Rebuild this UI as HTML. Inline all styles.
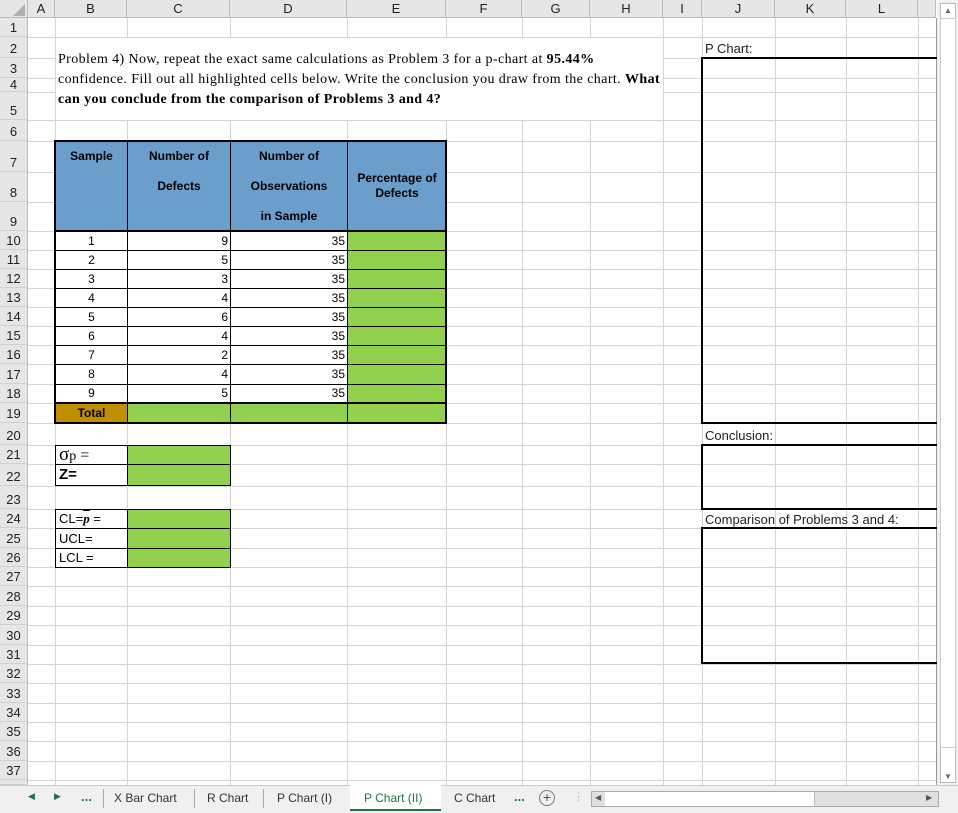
<!DOCTYPE html>
<html><head><meta charset="utf-8"><style>
*{margin:0;padding:0;box-sizing:border-box}
body{width:958px;height:813px;overflow:hidden;background:#fff;position:relative;font-family:"Liberation Sans",sans-serif}
div{position:absolute}
.h{left:28px;width:908px;height:1px;background:#d4d4d4}
.v{top:18px;height:767px;width:1px;background:#d4d4d4}
.rn{left:0;width:28px;background:#e6e6e6;border-right:1px solid #bbb;border-bottom:1px solid #d0d0d0;font-size:13px;color:#222;text-align:center;display:flex;align-items:flex-end;justify-content:center;line-height:1}
.ch{top:0;height:18px;background:#e6e6e6;border-right:1px solid #bbb;border-bottom:1px solid #bbb;font-size:13px;color:#222;text-align:center;line-height:18px}
.g{background:#92d050}
.bl{background:#6b9ecb}
.hd{font-weight:bold;font-size:12px;text-align:center;color:#000}
.lab{font-size:13px;color:#000;border:1px solid #000;padding-left:3px}
.gb{background:#92d050;border:1px solid #000}
.tab{top:788px;font-size:12px;color:#333;height:20px;line-height:20px}
</style></head><body>
<div class="h" style="top:37px"></div><div class="h" style="top:58px"></div><div class="h" style="top:78px"></div><div class="h" style="top:92px"></div><div class="h" style="top:120px"></div><div class="h" style="top:141px"></div><div class="h" style="top:172px"></div><div class="h" style="top:202px"></div><div class="h" style="top:231px"></div><div class="h" style="top:250px"></div><div class="h" style="top:269px"></div><div class="h" style="top:288px"></div><div class="h" style="top:307px"></div><div class="h" style="top:326px"></div><div class="h" style="top:345px"></div><div class="h" style="top:364px"></div><div class="h" style="top:384px"></div><div class="h" style="top:403px"></div><div class="h" style="top:423px"></div><div class="h" style="top:445px"></div><div class="h" style="top:464px"></div><div class="h" style="top:486px"></div><div class="h" style="top:509px"></div><div class="h" style="top:528px"></div><div class="h" style="top:548px"></div><div class="h" style="top:567px"></div><div class="h" style="top:586px"></div><div class="h" style="top:606px"></div><div class="h" style="top:625px"></div><div class="h" style="top:645px"></div><div class="h" style="top:664px"></div><div class="h" style="top:683px"></div><div class="h" style="top:703px"></div><div class="h" style="top:722px"></div><div class="h" style="top:741px"></div><div class="h" style="top:761px"></div><div class="h" style="top:780px"></div>
<div class="v" style="left:55px"></div><div class="v" style="left:127px"></div><div class="v" style="left:230px"></div><div class="v" style="left:347px"></div><div class="v" style="left:446px"></div><div class="v" style="left:522px"></div><div class="v" style="left:590px"></div><div class="v" style="left:663px"></div><div class="v" style="left:702px"></div><div class="v" style="left:775px"></div><div class="v" style="left:846px"></div><div class="v" style="left:918px"></div>
<div style="left:936px;top:18px;width:1px;height:767px;background:#999"></div>
<div style="left:56px;top:38px;width:607px;height:82px;background:#fff"></div>
<div style="left:58px;top:50px;width:605px;font-family:'Liberation Serif',serif;font-size:14px;letter-spacing:0.4px;line-height:20px;color:#000;white-space:nowrap">Problem 4) Now, repeat the exact same calculations as Problem 3 for a p-chart at <b>95.44%</b><br>confidence. Fill out all highlighted cells below. Write the conclusion you draw from the chart. <b>What</b><br><b>can you conclude from the comparison of Problems 3 and 4?</b></div>
<div class="ch" style="left:0;width:28px;background:#e6e6e6"><svg width="14" height="14" style="position:absolute;left:12px;top:3px"><polygon points="13,1 13,13 1,13" fill="#b0b0b0"/></svg></div>
<div class="ch" style="left:28px;width:27px">A</div><div class="ch" style="left:55px;width:72px">B</div><div class="ch" style="left:127px;width:103px">C</div><div class="ch" style="left:230px;width:117px">D</div><div class="ch" style="left:347px;width:99px">E</div><div class="ch" style="left:446px;width:76px">F</div><div class="ch" style="left:522px;width:68px">G</div><div class="ch" style="left:590px;width:73px">H</div><div class="ch" style="left:663px;width:39px">I</div><div class="ch" style="left:702px;width:73px">J</div><div class="ch" style="left:775px;width:71px">K</div><div class="ch" style="left:846px;width:72px">L</div><div class="ch" style="left:918px;width:18px"></div>
<div class="rn" style="top:18px;height:19px;padding-bottom:2px">1</div>
<div class="rn" style="top:37px;height:21px;padding-bottom:2px">2</div>
<div class="rn" style="top:58px;height:20px;padding-bottom:2px">3</div>
<div class="rn" style="top:78px;height:14px;padding-bottom:0">4</div>
<div class="rn" style="top:92px;height:28px;padding-bottom:2px">5</div>
<div class="rn" style="top:120px;height:21px;padding-bottom:2px">6</div>
<div class="rn" style="top:141px;height:31px;padding-bottom:2px">7</div>
<div class="rn" style="top:172px;height:30px;padding-bottom:2px">8</div>
<div class="rn" style="top:202px;height:29px;padding-bottom:2px">9</div>
<div class="rn" style="top:231px;height:19px;padding-bottom:2px">10</div>
<div class="rn" style="top:250px;height:19px;padding-bottom:2px">11</div>
<div class="rn" style="top:269px;height:19px;padding-bottom:2px">12</div>
<div class="rn" style="top:288px;height:19px;padding-bottom:2px">13</div>
<div class="rn" style="top:307px;height:19px;padding-bottom:2px">14</div>
<div class="rn" style="top:326px;height:19px;padding-bottom:2px">15</div>
<div class="rn" style="top:345px;height:19px;padding-bottom:2px">16</div>
<div class="rn" style="top:364px;height:20px;padding-bottom:2px">17</div>
<div class="rn" style="top:384px;height:19px;padding-bottom:2px">18</div>
<div class="rn" style="top:403px;height:20px;padding-bottom:2px">19</div>
<div class="rn" style="top:423px;height:22px;padding-bottom:2px">20</div>
<div class="rn" style="top:445px;height:19px;padding-bottom:2px">21</div>
<div class="rn" style="top:464px;height:22px;padding-bottom:2px">22</div>
<div class="rn" style="top:486px;height:23px;padding-bottom:2px">23</div>
<div class="rn" style="top:509px;height:19px;padding-bottom:2px">24</div>
<div class="rn" style="top:528px;height:20px;padding-bottom:2px">25</div>
<div class="rn" style="top:548px;height:19px;padding-bottom:2px">26</div>
<div class="rn" style="top:567px;height:19px;padding-bottom:2px">27</div>
<div class="rn" style="top:586px;height:20px;padding-bottom:2px">28</div>
<div class="rn" style="top:606px;height:19px;padding-bottom:2px">29</div>
<div class="rn" style="top:625px;height:20px;padding-bottom:2px">30</div>
<div class="rn" style="top:645px;height:19px;padding-bottom:2px">31</div>
<div class="rn" style="top:664px;height:19px;padding-bottom:2px">32</div>
<div class="rn" style="top:683px;height:20px;padding-bottom:2px">33</div>
<div class="rn" style="top:703px;height:19px;padding-bottom:2px">34</div>
<div class="rn" style="top:722px;height:19px;padding-bottom:2px">35</div>
<div class="rn" style="top:741px;height:20px;padding-bottom:2px">36</div>
<div class="rn" style="top:761px;height:19px;padding-bottom:2px">37</div>
<div class="rn" style="top:780px;height:5px"></div>
<div class="bl" style="left:55px;top:141px;width:391px;height:90px"></div>
<div style="left:127px;top:141px;width:1px;height:90px;background:#000"></div>
<div style="left:230px;top:141px;width:1px;height:90px;background:#000"></div>
<div style="left:347px;top:141px;width:1px;height:90px;background:#000"></div>
<div class="hd" style="left:56px;top:149px;width:71px">Sample</div>
<div class="hd" style="left:128px;top:149px;width:102px">Number of</div>
<div class="hd" style="left:128px;top:179px;width:102px">Defects</div>
<div class="hd" style="left:231px;top:149px;width:116px">Number of</div>
<div class="hd" style="left:231px;top:179px;width:116px">Observations</div>
<div class="hd" style="left:231px;top:209px;width:116px">in Sample</div>
<div class="hd" style="left:348px;top:171px;width:98px;line-height:15px">Percentage of<br>Defects</div>
<div style="left:55px;top:231px;width:391px;height:172px;background:#fff"></div>
<div class="g" style="left:347px;top:231px;width:99px;height:192px"></div>
<div class="g" style="left:127px;top:403px;width:220px;height:20px"></div>
<div style="left:55px;top:403px;width:72px;height:20px;background:#bf8f00"></div>
<div style="left:55px;top:230px;width:391px;height:2px;background:#000"></div>
<div style="left:55px;top:402px;width:391px;height:2px;background:#000"></div>
<div style="left:55px;top:250px;width:391px;height:1px;background:#000"></div><div style="left:55px;top:269px;width:391px;height:1px;background:#000"></div><div style="left:55px;top:288px;width:391px;height:1px;background:#000"></div><div style="left:55px;top:307px;width:391px;height:1px;background:#000"></div><div style="left:55px;top:326px;width:391px;height:1px;background:#000"></div><div style="left:55px;top:345px;width:391px;height:1px;background:#000"></div><div style="left:55px;top:364px;width:391px;height:1px;background:#000"></div><div style="left:55px;top:384px;width:391px;height:1px;background:#000"></div>
<div style="left:127px;top:231px;width:1px;height:192px;background:#000"></div>
<div style="left:230px;top:231px;width:1px;height:192px;background:#000"></div>
<div style="left:347px;top:231px;width:1px;height:192px;background:#000"></div>
<div style="left:54px;top:140px;width:393px;height:284px;border:2px solid #000"></div>
<div style="left:56px;top:232px;width:71px;font-size:12px;line-height:19px;text-align:center">1<br>2<br>3<br>4<br>5<br>6<br>7<br>8<br>9</div>
<div style="left:128px;top:232px;width:100px;font-size:12px;line-height:19px;text-align:right">9<br>5<br>3<br>4<br>6<br>4<br>2<br>4<br>5</div>
<div style="left:231px;top:232px;width:114px;font-size:12px;line-height:19px;text-align:right">35<br>35<br>35<br>35<br>35<br>35<br>35<br>35<br>35</div>
<div class="hd" style="left:56px;top:405px;width:71px;line-height:16px">Total</div>
<div class="lab" style="left:55px;top:445px;width:73px;height:20px;font-family:'Liberation Serif',serif;font-size:16px;line-height:18px"><span style="font-size:19px">σ</span><span style="font-size:14px">p</span> =</div>
<div class="lab" style="left:55px;top:464px;width:73px;height:22px;font-weight:bold;font-size:15px;line-height:20px">Z=</div>
<div class="gb" style="left:127px;top:445px;width:104px;height:20px"></div>
<div class="gb" style="left:127px;top:464px;width:104px;height:22px"></div>
<div class="lab" style="left:55px;top:509px;width:73px;height:20px;line-height:18px">CL=<i style="font-family:'Liberation Serif',serif;font-weight:bold;text-decoration:overline">p</i> =</div>
<div class="lab" style="left:55px;top:528px;width:73px;height:21px;line-height:19px">UCL=</div>
<div class="lab" style="left:55px;top:548px;width:73px;height:20px;line-height:18px">LCL =</div>
<div class="gb" style="left:127px;top:509px;width:104px;height:20px"></div>
<div class="gb" style="left:127px;top:528px;width:104px;height:21px"></div>
<div class="gb" style="left:127px;top:548px;width:104px;height:20px"></div>
<div style="left:705px;top:41px;font-size:13px;color:#222">P Chart:</div>
<div style="left:701px;top:57px;width:240px;height:367px;border:2px solid #000;background:transparent"></div>
<div style="left:705px;top:428px;font-size:13px;color:#222">Conclusion:</div>
<div style="left:701px;top:444px;width:240px;height:66px;border:2px solid #000"></div>
<div style="left:705px;top:512px;font-size:13px;color:#222">Comparison of Problems 3 and 4:</div>
<div style="left:701px;top:527px;width:240px;height:137px;border:2px solid #000"></div>
<div style="left:937px;top:0;width:21px;height:785px;background:#f0f0f0"></div>
<div style="left:940px;top:3px;width:16px;height:780px;background:#fff;border:1px solid #bbb"></div>
<div style="left:940px;top:18px;width:16px;height:730px;background:#fff;border:1px solid #ccc"></div>
<div style="left:944px;top:6px;font-size:8px;color:#666">▲</div>
<div style="left:944px;top:772px;font-size:8px;color:#666">▼</div>
<div style="left:0;top:785px;width:958px;height:28px;background:#f0f0f0;border-top:1px solid #ccc"></div>
<div style="left:28px;top:791px;font-size:9px;color:#217346">◀</div>
<div style="left:54px;top:791px;font-size:9px;color:#217346">▶</div>
<div style="left:81px;top:789px;font-size:13px;color:#217346;font-weight:bold">...</div>
<div style="left:103px;top:789px;width:1px;height:19px;background:#aaa"></div>
<div class="tab" style="left:114px">X Bar Chart</div>
<div style="left:194px;top:789px;width:1px;height:19px;background:#aaa"></div>
<div class="tab" style="left:207px">R Chart</div>
<div style="left:263px;top:789px;width:1px;height:19px;background:#aaa"></div>
<div class="tab" style="left:277px">P Chart (I)</div>
<div style="left:350px;top:785px;width:91px;height:26px;background:#fff;border-bottom:2px solid #217346"></div>
<div class="tab" style="left:364px;color:#217346">P Chart (II)</div>
<div class="tab" style="left:454px">C Chart</div>
<div style="left:514px;top:789px;font-size:13px;color:#217346;font-weight:bold">...</div>
<div style="left:539px;top:790px;width:16px;height:16px;border:1px solid #777;border-radius:50%;font-size:14px;line-height:13px;text-align:center;color:#555">+</div>
<div style="left:573px;top:790px;font-size:11px;color:#bbb">⋮</div>
<div style="left:591px;top:791px;width:348px;height:16px;background:#e0e0e0;border:1px solid #aaa"></div>
<div style="left:605px;top:792px;width:210px;height:14px;background:#fff;border-right:1px solid #bbb"></div>
<div style="left:595px;top:793px;font-size:8px;color:#555">◀</div>
<div style="left:926px;top:793px;font-size:8px;color:#555">▶</div>
</body></html>
